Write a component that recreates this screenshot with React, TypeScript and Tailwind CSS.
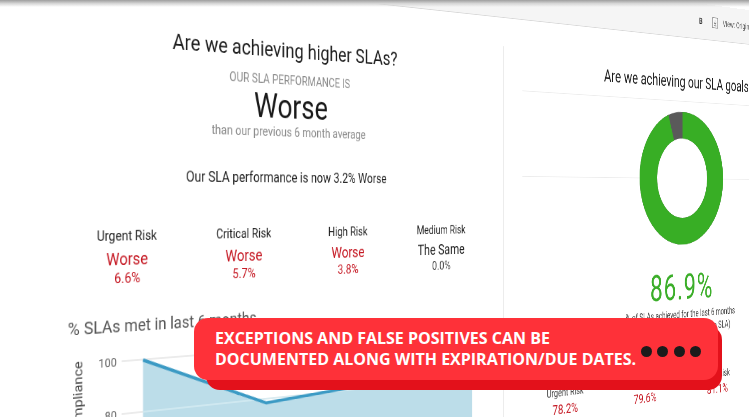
import React from "react";

function Donut() {
  const C = 2 * Math.PI * 77.5;
  return (
    <svg width="194" height="194" viewBox="0 0 194 194" className="shrink-0">
      <circle cx="97" cy="97" r="77.5" fill="#ffffff" stroke="#5a5a5a" strokeWidth="39" />
      <circle
        cx="97"
        cy="97"
        r="77.5"
        fill="none"
        stroke="#38ae25"
        strokeWidth="39"
        strokeDasharray={`${0.944 * C} ${C}`}
        transform="rotate(-90 97 97)"
      />
    </svg>
  );
}

function ChartPlot() {
  return (
    <svg width="530" height="217" viewBox="0 0 530 217" className="shrink-0 ml-[6px]">
      <line x1="0" y1="28" x2="530" y2="28" stroke="#e4e4e4" strokeWidth="1.5" />
      <line x1="0" y1="84" x2="530" y2="84" stroke="#e4e4e4" strokeWidth="1.5" />
      <line x1="0" y1="140" x2="530" y2="140" stroke="#e4e4e4" strokeWidth="1.5" />
      <path d="M26.4 28.5 L189.6 88.7 L354 79 L517 57 L517 217 L26.4 217 Z" fill="#bcdde9" />
      <line x1="26.4" y1="84" x2="517" y2="84" stroke="#d6ebf2" strokeWidth="1.5" />
      <line x1="26.4" y1="140" x2="517" y2="140" stroke="#d6ebf2" strokeWidth="1.5" />
      <path
        d="M26.4 28.5 L189.6 88.7 L354 79 L517 57"
        fill="none"
        stroke="#3b9ac4"
        strokeWidth="3.5"
        strokeLinejoin="round"
      />
    </svg>
  );
}

function RiskCol({
  label,
  value,
  pct,
  red,
}: {
  label: string;
  value: string;
  pct: string;
  red: boolean;
}) {
  return (
    <div className="flex flex-col items-center">
      <div className="text-[14.5px] leading-[14.5px] text-[#222]">{label}</div>
      <div className={`mt-[7px] text-[18px] leading-[18px] ${red ? "text-[#c4141f]" : "text-[#1e1e1e]"}`}>
        {value}
      </div>
      <div className={`mt-[4px] text-[15px] leading-[15px] ${red ? "text-[#c4141f]" : "text-[#444]"}`}>
        {pct}
      </div>
    </div>
  );
}

function RightRisk({ label, pct }: { label: string; pct: string }) {
  return (
    <div className="flex flex-col items-center">
      <div className="text-[14.5px] leading-[14.5px] text-[#444]">{label}</div>
      <div className="mt-[4px] text-[19px] leading-[19px] text-[#c4141f]">{pct}</div>
    </div>
  );
}

export default function App() {
  return (
    <div className="relative w-[749px] h-[417px] overflow-hidden bg-white font-[Roboto,sans-serif]">
      {/* tilted dashboard plane */}
      <div className="mt-[-90px] w-[1460px] h-[650px] origin-[0px_288px] [transform:perspective(915px)_rotateY(23deg)] flex flex-col bg-white">
        {/* toolbar */}
        <div className="h-[53px] shrink-0 bg-[#f5f5f5] border-b border-[#d8d8d8] flex items-center pl-[1124px] text-[12.5px] text-[#555]">
          <span className="font-bold text-[13px] text-[#333]">B</span>
          <svg width="18" height="18" viewBox="0 0 18 18" className="ml-[22px]">
            <rect x="2" y="1.5" width="13" height="15" rx="1" fill="#fafafa" stroke="#777" strokeWidth="1.2" />
            <path d="M8.5 4.5 V11 M5.8 8.5 L8.5 11.2 L11.2 8.5 M5.5 13.3 H11.5" fill="none" stroke="#666" strokeWidth="1.2" />
          </svg>
          <span className="ml-[9px]">View: Original</span>
        </div>

        {/* cards */}
        <div className="mt-[37px] flex h-[560px]">
          {/* left panel */}
          <div className="w-[713px] shrink-0 flex flex-col pl-[20px] text-center">
            <h2 className="mt-[16px] text-[24px] leading-[24px] text-[#1e1e1e]">Are we achieving higher SLAs?</h2>
            <div className="mt-[15px] text-[14px] leading-[14px] text-[#8c8c8c]">OUR SLA PERFORMANCE IS</div>
            <div className="mt-[4.5px] text-[38px] leading-[38px] text-[#1a1a1a]">Worse</div>
            <div className="mt-[4px] text-[14.5px] leading-[14.5px] text-[#8c8c8c]">
              than our previous 6 month average
            </div>
            <div className="mt-[37px] text-[16px] leading-[16px] text-[#222]">
              Our SLA performance is now 3.2% Worse
            </div>

            <div className="mt-[49px] ml-[51px] w-[608px] grid grid-cols-4">
              <RiskCol label="Urgent Risk" value="Worse" pct="6.6%" red />
              <RiskCol label="Critical Risk" value="Worse" pct="5.7%" red />
              <RiskCol label="High Risk" value="Worse" pct="3.8%" red />
              <RiskCol label="Medium Risk" value="The Same" pct="0.0%" red={false} />
            </div>

            <div className="mt-[33px] ml-[56px] text-left text-[19px] leading-[19px] text-[#555]">
              % SLAs met in last 6 months
            </div>

            <div className="ml-[59px] flex h-[217px]">
              <div className="w-[18px] shrink-0 flex justify-center">
                <span className="mt-[25px] h-[80px] [writing-mode:vertical-rl] rotate-180 text-[15px] leading-[18px] text-[#444] text-right">
                  Compliance
                </span>
              </div>
              <div className="w-[37px] shrink-0 flex flex-col items-end text-[13px] leading-[13px] text-[#666]">
                <span className="mt-[22px]">100</span>
                <span className="mt-[43px]">80</span>
                <span className="mt-[43px]">60</span>
              </div>
              <ChartPlot />
            </div>
          </div>

          {/* right panel */}
          <div className="w-[742px] shrink-0 border-l border-[#e8e8e8] flex flex-col items-center text-center">
            <h2 className="mt-[16px] text-[24px] leading-[24px] text-[#1e1e1e]">Are we achieving our SLA goals?</h2>
            <div className="mt-[16px] self-stretch mx-[35px] h-px bg-[#ececec]" />
            <div className="mt-[15px] self-stretch mx-[35px] flex items-center">
              <div className="flex-1 h-px bg-[#ececec]" />
              <Donut />
              <div className="flex-1 h-px bg-[#ececec]" />
            </div>
            <div className="mt-[37px] text-[51px] leading-[51px] tracking-[2px] text-[#3bae29]">86.9%</div>
            <div className="mt-[5px] text-[14px] leading-[19.5px] text-[#444]">
              % of SLAs achieved for the last 6 months
              <br />
              (Urgent, Critical, High &amp; Medium SLA)
            </div>
            <div className="mt-[57px] w-[672px] grid grid-cols-4">
              <RightRisk label="Urgent Risk" pct="78.2%" />
              <RightRisk label="Critical Risk" pct="79.6%" />
              <RightRisk label="High Risk" pct="81.1%" />
              <RightRisk label="Medium Risk" pct="92.4%" />
            </div>
          </div>
        </div>
      </div>

      {/* photo top edge */}
      <div className="absolute top-0 left-0 w-full h-[7px] bg-linear-to-b from-[#9e9e9e] via-[#d6d6d6] to-white/0" />

      {/* red callout banner */}
      <div className="absolute left-[194px] top-[318px] w-[528px] h-[72px] font-['Open_Sans',sans-serif]">
        <div className="absolute left-[12px] top-[8px] right-0 bottom-0 rounded-[14px] bg-[#e3111b]" />
        <div className="relative w-[524px] h-[62px] rounded-[14px] bg-[#fe3139] flex items-center pl-[21px] pr-[17px]">
          <div className="text-white font-bold text-[16px] leading-[21px] whitespace-nowrap">
            <div>EXCEPTIONS AND FALSE POSITIVES CAN BE</div>
            <div>DOCUMENTED ALONG WITH EXPIRATION/DUE DATES.</div>
          </div>
          <div className="ml-auto flex items-center gap-[5.5px] mt-[4px]">
            <span className="w-[11px] h-[11px] rounded-full bg-[#1b1b1b]" />
            <span className="w-[11px] h-[11px] rounded-full bg-[#1b1b1b]" />
            <span className="w-[11px] h-[11px] rounded-full bg-[#1b1b1b]" />
            <span className="w-[11px] h-[11px] rounded-full bg-[#1b1b1b]" />
          </div>
        </div>
      </div>
    </div>
  );
}
